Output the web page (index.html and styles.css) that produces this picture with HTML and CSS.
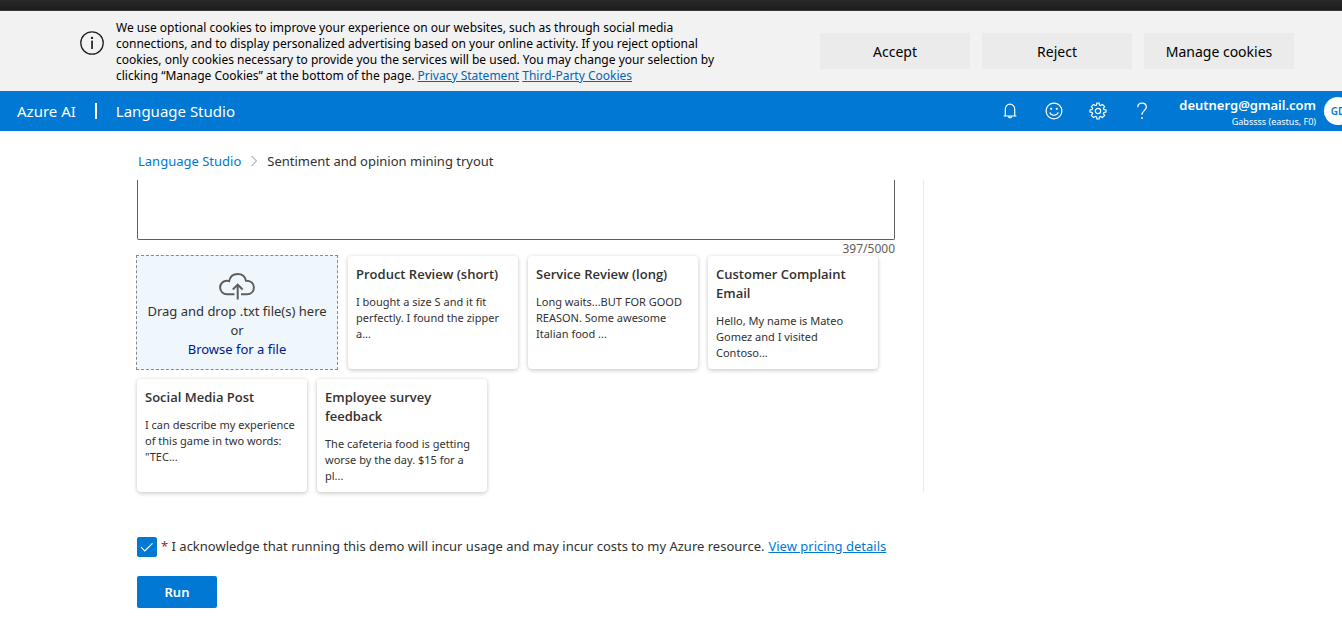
FILE: index.html
```html
<!DOCTYPE html>
<html lang="en">
<head>
<meta charset="utf-8">
<title>Language Studio - Sentiment and opinion mining tryout</title>
<link rel="stylesheet" href="styles.css">
</head>
<body>
<div class="window-edge"></div>
<section class="cookie-banner" aria-label="Cookie consent">
  <svg class="info-icon" viewBox="0 0 24 24" aria-hidden="true">
    <circle cx="12" cy="12" r="11.2" fill="none" stroke="currentColor" stroke-width="1.3"/>
    <rect x="11.2" y="9.6" width="1.7" height="8.4" fill="currentColor"/>
    <circle cx="12" cy="6.9" r="1.2" fill="currentColor"/>
  </svg>
  <p class="cookie-text">We use optional cookies to improve your experience on our websites, such as through social media connections, and to display personalized advertising based on your online activity. If you reject optional cookies, only cookies necessary to provide you the services will be used. You may change your selection by clicking “Manage Cookies” at the bottom of the page. <a href="#privacy">Privacy Statement</a> <a href="#third-party">Third-Party Cookies</a></p>
  <div class="cookie-actions">
    <button type="button">Accept</button>
    <button type="button">Reject</button>
    <button type="button">Manage cookies</button>
  </div>
</section>
<header class="topbar">
  <a class="brand" href="#azure">Azure AI</a>
  <span class="brand-divider"></span>
  <a class="brand" href="#studio">Language Studio</a>
  <div class="tools">
    <button type="button" aria-label="Notifications">
      <svg viewBox="0 0 18 18"><path d="M2.6 14h12.800M4.300 14V6.900a4.700 4.700 0 0 1 9.400 0V14M7.500 14.300a1.500 1.500 0 0 0 3 0"/></svg>
    </button>
    <button type="button" aria-label="Feedback">
      <svg viewBox="0 0 18 18"><circle cx="9" cy="9" r="7.9"/><path d="M4.800 10.400c1.400 3.800 7 3.800 8.400 0"/><circle class="dot" cx="6.2" cy="6.8" r="1.1"/><circle class="dot" cx="11.8" cy="6.8" r="1.1"/></svg>
    </button>
    <button type="button" aria-label="Settings">
      <svg viewBox="0 0 18 18"><path d="M7.900 1h2.200l.400 2.100 1.200.500 1.800-1.200 2.100 2.100-1.200 1.800.500 1.200 2.100.400v2.200l-2.100.400-.500 1.200 1.200 1.800-2.100 2.100-1.800-1.200-1.200.500-.400 2.100H7.900l-.400-2.100-1.200-.500-1.800 1.200-2.100-2.100 1.200-1.800-.500-1.200L1 10.100V7.900l2.100-.400.500-1.200-1.200-1.800 2.100-2.100 1.800 1.200 1.200-.500z"/><circle cx="9" cy="9" r="2.700"/></svg>
    </button>
    <button type="button" aria-label="Help">
      <svg viewBox="0 0 18 18"><path d="M4.700 5.200C4.800 2.600 6.600 1.200 9.100 1.200c2.500 0 4.200 1.500 4.200 3.700 0 3.700-4.300 3.900-4.300 7.900"/><circle class="dot" cx="9" cy="16" r=".9"/></svg>
    </button>
  </div>
  <div class="account">
    <span class="account-name">deutnerg@gmail.com</span>
    <span class="account-resource">Gabssss (eastus, F0)</span>
  </div>
  <button type="button" class="avatar">GD</button>
</header>
<nav class="breadcrumb" aria-label="Breadcrumb">
  <a href="#studio">Language Studio</a>
  <svg viewBox="0 0 8 12" aria-hidden="true"><path d="M1.500 1l5 5-5 5"/></svg>
  <span>Sentiment and opinion mining tryout</span>
</nav>
<main class="page">
  <div class="editor">
    <textarea class="input-text" aria-label="Input text"></textarea>
    <div class="counter">397/5000</div>
    <div class="samples">
      <div class="dropzone">
        <svg viewBox="0 0 36 28" aria-hidden="true"><path d="M15.500 22.300H8A6.800 6.800 0 0 1 7.800 8.700C8.600 8.700 9.400 8.800 10.100 9.100 11.100 4.500 14.300 1.900 18.600 1.900c4.300 0 7.600 2.700 8.400 6.800 4.700 0 7.900 2.800 7.900 6.800s-2.900 6.800-6.900 6.800H22"/><path d="M18.700 27.500V12.800M13.800 17.500l4.900-4.900 4.900 4.900"/></svg>
        <span>Drag and drop .txt file(s) here</span>
        <span>or</span>
        <a href="#browse">Browse for a file</a>
      </div>
      <article class="card"><h2>Product Review (short)</h2><p>I bought a size S and it fit perfectly. I found the zipper a...</p></article>
      <article class="card"><h2>Service Review (long)</h2><p>Long waits...BUT FOR GOOD REASON. Some awesome Italian food ...</p></article>
      <article class="card"><h2>Customer Complaint Email</h2><p>Hello, My name is Mateo Gomez and I visited Contoso...</p></article>
      <article class="card"><h2>Social Media Post</h2><p>I can describe my experience of this game in two words: "TEC...</p></article>
      <article class="card"><h2>Employee survey feedback</h2><p>The cafeteria food is getting worse by the day. $15 for a pl...</p></article>
    </div>
  </div>
  <div class="consent">
    <span class="check">
      <input type="checkbox" id="ack" checked>
      <svg viewBox="0 0 20 20" aria-hidden="true"><path d="M4 10.200l3.800 3.800L15.500 6.300"/></svg>
    </span>
    <label for="ack"><span class="required">*</span> I acknowledge that running this demo will incur usage and may incur costs to my Azure resource.</label>
    <a href="#pricing">View pricing details</a>
  </div>
  <button type="button" class="run">Run</button>
</main>
</body>
</html>
```
FILE: styles.css
```css
* { box-sizing: border-box; }
body {
  margin: 0;
  background: #fff;
  color: #323130;
  font-family: "Noto Sans", "Open Sans", sans-serif;
  font-size: 13px;
  line-height: 19px;
  overflow-x: hidden;
}
button { font: inherit; border: 0; padding: 0; }
p, h2 { margin: 0; }

.window-edge {
  height: 11px;
  background: linear-gradient(#292929, #1c1c1c);
  border-bottom: 1px solid #3b3736;
}

.cookie-banner {
  display: flex;
  align-items: center;
  padding: 8px 48px 8px 80px;
  min-height: 80px;
  background: #f2f2f2;
  color: #000;
}
.info-icon { flex: none; align-self: flex-start; width: 24px; height: 24px; margin: 12px 12px 0 0; color: #231f20; }
.cookie-text { width: 630px; padding-top: 1px; margin-bottom: -1px; font-size: 12px; line-height: 16px; }
.cookie-text a { color: #0067b8; }
.cookie-actions { display: flex; gap: 12px; margin-left: auto; }
.cookie-actions button { width: 150px; height: 36px; background: #ebebeb; color: #000; font-size: 14px; }

.topbar {
  display: flex;
  align-items: center;
  height: 40px;
  padding-left: 17px;
  background: #0078d4;
  color: #fff;
  overflow: hidden;
}
.brand { color: #fff; text-decoration: none; font-size: 15px; }
.brand-divider { width: 2px; height: 16px; margin: 0 19px; background: #fff; }
.tools { display: flex; margin-left: auto; }
.tools button { display: grid; place-items: center; width: 44px; height: 40px; background: none; }
.tools svg { width: 18px; height: 18px; fill: none; stroke: #fff; stroke-width: 1.2; }
.tools .dot { fill: #fff; stroke: none; }
.account { display: flex; flex-direction: column; align-items: flex-end; width: 152px; padding-top: 4px; }
.account-name { font-size: 13px; font-weight: 600; line-height: 16px; }
.account-resource { font-size: 9px; line-height: 17px; }
.avatar {
  flex: none;
  width: 28px;
  height: 28px;
  margin: 0 -10px 0 8px;
  border-radius: 50%;
  background: #fff;
  color: #0078d4;
  font-size: 10px;
  font-weight: 600;
}

.breadcrumb { display: flex; align-items: center; gap: 9px; height: 49px; padding: 11px 0 0 138px; }
.breadcrumb a { color: #0078d4; text-decoration: none; }
.breadcrumb svg { width: 8px; height: 12px; fill: none; stroke: #8a8886; }

.page { padding-left: 137px; }
.editor { max-width: 787px; padding-right: 28px; border-right: 1px solid #edebe9; }
.input-text {
  display: block;
  width: 100%;
  height: 60px;
  border: 1px solid #605e5c;
  border-top: 0;
  border-radius: 0 0 2px 2px;
  resize: none;
  background: #fff;
}
.counter { height: 15px; color: #605e5c; font-size: 12px; line-height: 17px; text-align: right; }
.samples { display: flex; flex-wrap: wrap; align-items: center; gap: 9px 10px; }
.dropzone {
  display: flex;
  flex-direction: column;
  align-items: center;
  justify-content: center;
  width: 202px;
  height: 115px;
  margin-left: -1px;
  padding-top: 6px;
  border: 1px dashed #8a8886;
  background: #eff6fc;
}
.dropzone svg { width: 36px; height: 28px; margin-bottom: 2px; fill: none; stroke: #605e5c; stroke-width: 2; }
.dropzone a { color: #00188f; text-decoration: none; }
.card {
  width: 170px;
  min-height: 113px;
  padding: 9px 7px 8px 8px;
  border-radius: 4px;
  background: #fff;
  box-shadow: 0 2px 4px rgba(0, 0, 0, .14), 0 0 4px rgba(0, 0, 0, .1);
}
.card h2 { font-family: "Open Sans", "Noto Sans", sans-serif; font-size: 13px; line-height: 19px; font-weight: 600; }
.card p { margin-top: 10px; font-size: 11px; line-height: 16px; }

.consent { display: flex; align-items: center; margin-top: 44px; line-height: 21px; }
.consent a { margin-left: 4px; color: #0078d4; }
.check { display: grid; width: 20px; height: 20px; margin-right: 4px; }
.check input { grid-area: 1 / 1; appearance: none; width: 20px; height: 20px; margin: 0; border: 1px solid #605e5c; border-radius: 2px; }
.check input:checked { background: #0078d4; border-color: #0078d4; }
.check svg { grid-area: 1 / 1; z-index: 1; fill: none; stroke: #fff; stroke-width: 1.2; pointer-events: none; }
.required { color: #a4262c; }
.run { display: block; width: 80px; height: 32px; margin-top: 19px; border-radius: 2px; background: #0078d4; color: #fff; font-weight: 600; }
```
